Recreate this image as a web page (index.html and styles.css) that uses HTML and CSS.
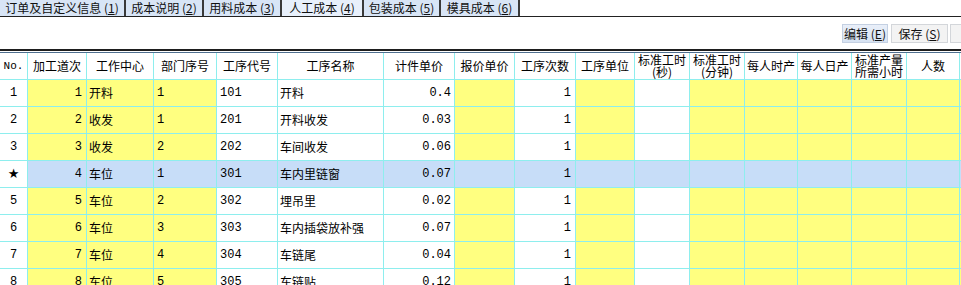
FILE: index.html
```html
<!DOCTYPE html>
<html lang="zh-CN">
<head>
    <meta charset="UTF-8">
    <title>人工成本</title>
    <link rel="stylesheet" href="styles.css">
</head>
<body>
    <div class="tabs">
        <div class="tab">订单及自定义信息 (<u>1</u>)</div>
        <div class="tab">成本说明 (<u>2</u>)</div>
        <div class="tab">用料成本 (<u>3</u>)</div>
        <div class="tab active">人工成本 (<u>4</u>)</div>
        <div class="tab">包装成本 (<u>5</u>)</div>
        <div class="tab">模具成本 (<u>6</u>)</div>
    </div>

    <div class="toolbar">
        <button class="btn hot">编辑 (<u>E</u>)</button>
        <button class="btn">保存 (<u>S</u>)</button>
        <button class="btn stub"></button>
    </div>

    <div class="grid">
        <div class="row head">
            <div class="mono">No.</div>
            <div>加工道次</div>
            <div>工作中心</div>
            <div>部门序号</div>
            <div>工序代号</div>
            <div>工序名称</div>
            <div>计件单价</div>
            <div>报价单价</div>
            <div>工序次数</div>
            <div>工序单位</div>
            <div class="two"><span>标准工时</span><span>(秒)</span></div>
            <div class="two"><span>标准工时</span><span>(分钟)</span></div>
            <div>每人时产</div>
            <div>每人日产</div>
            <div class="two"><span>标准产量</span><span>所需小时</span></div>
            <div>人数</div>
            <div></div>
        </div>

        <div class="row">
            <div>1</div><div>1</div><div>开料</div><div>1</div><div>101</div><div>开料</div><div>0.4</div><div></div><div>1</div>
            <div></div><div></div><div></div><div></div><div></div><div></div><div></div><div></div>
        </div>
        <div class="row">
            <div>2</div><div>2</div><div>收发</div><div>1</div><div>201</div><div>开料收发</div><div>0.03</div><div></div><div>1</div>
            <div></div><div></div><div></div><div></div><div></div><div></div><div></div><div></div>
        </div>
        <div class="row">
            <div>3</div><div>3</div><div>收发</div><div>2</div><div>202</div><div>车间收发</div><div>0.06</div><div></div><div>1</div>
            <div></div><div></div><div></div><div></div><div></div><div></div><div></div><div></div>
        </div>
        <div class="row selected">
            <div class="star">★</div><div>4</div><div>车位</div><div>1</div><div>301</div><div>车内里链窗</div><div>0.07</div><div></div><div>1</div>
            <div></div><div></div><div></div><div></div><div></div><div></div><div></div><div></div>
        </div>
        <div class="row">
            <div>5</div><div>5</div><div>车位</div><div>2</div><div>302</div><div>埋吊里</div><div>0.02</div><div></div><div>1</div>
            <div></div><div></div><div></div><div></div><div></div><div></div><div></div><div></div>
        </div>
        <div class="row">
            <div>6</div><div>6</div><div>车位</div><div>3</div><div>303</div><div>车内插袋放补强</div><div>0.07</div><div></div><div>1</div>
            <div></div><div></div><div></div><div></div><div></div><div></div><div></div><div></div>
        </div>
        <div class="row">
            <div>7</div><div>7</div><div>车位</div><div>4</div><div>304</div><div>车链尾</div><div>0.04</div><div></div><div>1</div>
            <div></div><div></div><div></div><div></div><div></div><div></div><div></div><div></div>
        </div>
        <div class="row">
            <div>8</div><div>8</div><div>车位</div><div>5</div><div>305</div><div>车链贴</div><div>0.12</div><div></div><div>1</div>
            <div></div><div></div><div></div><div></div><div></div><div></div><div></div><div></div>
        </div>
    </div>
</body>
</html>
```

FILE: styles.css
```css
* {
    margin: 0;
    padding: 0;
    box-sizing: border-box;
}

body {
    font-family: "Noto Sans CJK SC", "Liberation Sans", sans-serif;
    font-size: 12px;
    color: #000;
    background-color: #fff;
    width: 961px;
    height: 285px;
    overflow: hidden;
}

u {
    text-decoration: underline;
    text-underline-offset: 1px;
}

/* Tab strip */
.tabs {
    display: flex;
    height: 17px;
    border-bottom: 1px solid #222;
}

.tab {
    height: 16px;
    line-height: 16px;
    text-align: center;
    white-space: nowrap;
    background-color: #d8e5f6;
    border-right: 2px solid #3a3a3a;
    color: #111;
}

.tab:nth-child(1) { width: 126px; }
.tab:nth-child(2) { width: 78px; }
.tab:nth-child(3) { width: 78px; }
.tab:nth-child(4) { width: 82px; }
.tab:nth-child(5) { width: 77px; }
.tab:nth-child(6) { width: 79px; }

.tab.active {
    background-color: #e8f0fb;
}

/* Toolbar */
.toolbar {
    height: 34px;
    display: flex;
    justify-content: flex-end;
    align-items: center;
    border-bottom: 2px solid #1e1e1e;
}

.btn {
    height: 19px;
    line-height: 17px;
    font-family: inherit;
    font-size: 12px;
    color: #111;
    background-color: #f3f3f3;
    border: 1px solid #d3d6da;
    white-space: nowrap;
}

.btn.hot {
    width: 46px;
    margin-right: 3px;
    background: linear-gradient(#e9eff9, #d6e2f2);
    border-color: #c4d0e2;
}

.btn:nth-child(2) {
    width: 57px;
    margin-right: 2px;
}

.btn.stub {
    width: 11px;
    border-right: none;
}

/* Grid */
.grid {
    margin-top: 1px;
    border-top: 1px solid #4f6f8f;
    display: grid;
    grid-template-columns: 27px 58px 66px 62px 60px 105px 70px 59px 60px 58px 54px 54px 52px 53px 54px 52px 1fr;
    grid-auto-rows: 26px;
    gap: 1px;
    background-color: #8eeeee;
}

.row {
    display: contents;
}

.row > div {
    background-color: #fff;
    line-height: 26px;
    padding: 0 4px;
    white-space: nowrap;
    overflow: hidden;
}

.row > div:nth-child(1) {
    text-align: center;
    padding: 0;
    font-family: "Liberation Mono", monospace;
    font-size: 12px;
}

.row > div:nth-child(2),
.row > div:nth-child(7),
.row > div:nth-child(9) {
    text-align: right;
    font-family: "Liberation Mono", monospace;
    font-size: 12px;
}

.row > div:nth-child(7) {
    padding-right: 3px;
}

.row > div:nth-child(3) {
    padding-left: 2px;
}

.row > div:nth-child(4),
.row > div:nth-child(5) {
    padding-left: 3px;
    font-family: "Liberation Mono", monospace;
    font-size: 12px;
}

.row > div:nth-child(6) {
    padding-left: 2px;
}

.row > div:nth-child(2),
.row > div:nth-child(3),
.row > div:nth-child(4),
.row > div:nth-child(8),
.row > div:nth-child(10),
.row > div:nth-child(n+12) {
    background-color: #ffff80;
}

.row.selected > div {
    background-color: #c7ddf8;
}

.row.selected > div:nth-child(1) {
    background-color: #fff;
}

.row > div.star {
    font-family: "DejaVu Sans", sans-serif;
    font-size: 13px;
}

/* Header row */
.row.head > div {
    background-color: #fff;
    display: flex;
    flex-direction: column;
    align-items: center;
    justify-content: center;
    text-align: center;
    line-height: 16px;
    padding: 0;
    overflow: visible;
    font-family: "Noto Sans CJK SC", sans-serif;
    font-size: 12px;
}

.row.head > div.two {
    line-height: 12px;
}

.row.head > div.mono {
    font-family: "Liberation Mono", monospace;
    font-size: 11px;
}
```
